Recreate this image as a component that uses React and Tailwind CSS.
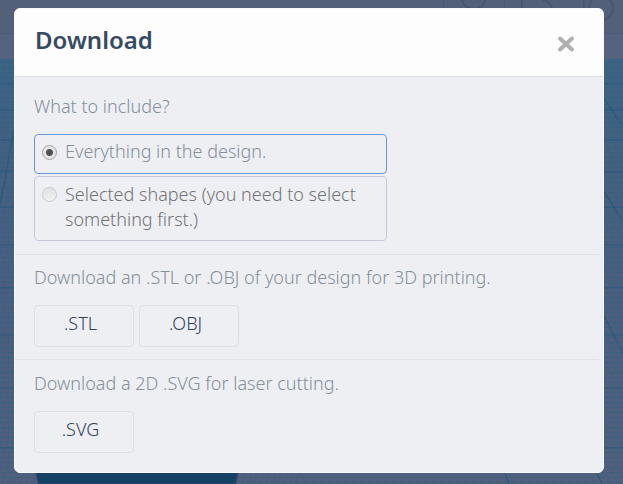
import React from "react";

function Workplane() {
  return (
    <svg
      className="absolute inset-0 h-full w-full"
      viewBox="0 0 623 484"
      preserveAspectRatio="none"
      aria-hidden="true"
    >
      <defs>
        <linearGradient id="plane" x1="0" y1="0" x2="0" y2="1">
          <stop offset="0" stopColor="#3d6384" />
          <stop offset="0.4" stopColor="#485f7e" />
          <stop offset="1" stopColor="#50607d" />
        </linearGradient>
        <pattern id="rows" width="20" height="5" patternUnits="userSpaceOnUse">
          <path d="M0 2.5H20" stroke="#2c5a80" strokeOpacity="0.35" />
        </pattern>
        <pattern id="leftCols" width="6" height="20" patternUnits="userSpaceOnUse" patternTransform="skewX(-14)">
          <path d="M3 0V20" stroke="#2c5a80" strokeOpacity="0.3" />
        </pattern>
        <pattern id="rightCols" width="8" height="20" patternUnits="userSpaceOnUse" patternTransform="skewX(27)">
          <path d="M4 0V20" stroke="#2c5a80" strokeOpacity="0.3" />
        </pattern>
      </defs>
      <rect width="623" height="59" fill="#526079" />
      <rect y="33" width="623" height="26" fill="#56637e" />
      <path d="M0 33.5H623" stroke="#4a5a78" />
      <path d="M443.500 0V9M504.500 0V9" stroke="#4a5a78" />
      <g fill="none" stroke="#46566f" strokeWidth="2">
        <path d="M462 0C463 5 468 9 474 9S484 5 485 0" />
        <path d="M522 9V0M542 0Q551 1 552 9" />
        <path d="M584 9V0" />
        <circle cx="601" cy="8" r="12" />
      </g>
      <rect y="59" width="623" height="425" fill="url(#plane)" />
      <rect y="59" width="623" height="425" fill="url(#rows)" />
      <rect y="59" width="300" height="425" fill="url(#leftCols)" />
      <rect x="300" y="59" width="323" height="425" fill="url(#rightCols)" />
      <g stroke="#235680" strokeWidth="1.2" strokeOpacity="0.7" fill="none">
        <path d="M0 84H14M0 110H14M0 140H14M0 171H14M0 207H14M0 245H14M0 288H14M0 335H14M0 388H14M0 448H14" />
        <path d="M604 84H623M604 110H623M604 140H623M604 172H623M604 207H623M604 245H623M604 288H623M604 335H623M604 388H623M604 448H623" />
        <path d="M14 130L0 205M604 99L623 126M604 192L623 221M604 316L623 354M505 473L509 484M597 473L602 484" />
      </g>
      <path d="M36 470H238L235 484H39Z" fill="#154164" stroke="#254469" strokeWidth="2" />
    </svg>
  );
}

function Option({ label, className, ...input }) {
  return (
    <label className={"flex items-start gap-2 rounded-[4px] border pl-[7px] pr-4 " + className}>
      <input
        type="radio"
        name="include"
        className="mt-[10px] size-[15px] shrink-0 appearance-none rounded-full border border-[#b4b4b4] bg-linear-to-b from-[#e0e1e2] to-[#f2f2f3] checked:border-[#a4a4a4] checked:bg-[radial-gradient(circle,#505050_0_3px,#e4e4e4_4px)] disabled:border-[#c8cacd]"
        {...input}
      />
      <span>{label}</span>
    </label>
  );
}

function FormatButton({ children }) {
  return (
    <button
      type="button"
      className="h-[42px] w-[100px] rounded-[4px] border border-[#dfe1e5] pr-[7px] pb-[5px] text-[#2e4259]"
    >
      {children}
    </button>
  );
}

export default function App() {
  return (
    <div className="relative min-h-screen overflow-hidden bg-[#50607d] font-['Noto_Sans','Open_Sans',sans-serif] text-[18px] leading-[25px] font-light">
      <Workplane />
      <div
        role="dialog"
        aria-labelledby="dialog-title"
        className="relative mt-2 mr-[19px] mb-[11px] ml-[14px] overflow-hidden rounded-[6px] border border-[#f8f9fb] bg-[#eeeff3] text-[#84909a]"
      >
        <header className="flex items-center justify-between border-b border-[#dadee6] bg-[#fdfdfd] pt-3 pr-7 pb-[18px] pl-5">
          <h2 id="dialog-title" className="text-[24px] leading-[37px] font-semibold text-[#364b63]">
            Download
          </h2>
          <button type="button" aria-label="Close" className="mt-2">
            <svg width="18" height="18" viewBox="0 0 18 18" aria-hidden="true">
              <path d="M3 3.500L15 14.500M15 3.500L3 14.500" stroke="#b0b0b0" strokeWidth="4" strokeLinecap="round" />
            </svg>
          </button>
        </header>

        <div className="pr-1">
          <fieldset className="border-b border-[#dfe1e6] px-[19px] pt-[17px] pb-[13px]">
            <legend className="float-left mb-[15px] w-full">What to include?</legend>
            <div className="clear-both flex max-w-[353px] flex-col gap-[2px]">
              <Option
                label="Everything in the design."
                className="border-[#6b96dc] pt-1 pb-[9px] [&>input]:mt-[6px]"
                defaultChecked
              />
              <Option
                label="Selected shapes (you need to select something first.)"
                className="border-[#c5cadb] pt-[5px] pb-2 text-[#747474] [&>input]:mt-[5px]"
                disabled
              />
            </div>
          </fieldset>

          <section className="border-b border-[#dfe1e6] px-[19px] pt-[10px] pb-3">
            <p className="mb-[15px]">Download an .STL or .OBJ of your design for 3D printing.</p>
            <div className="flex gap-[5px]">
              <FormatButton>.STL</FormatButton>
              <FormatButton>.OBJ</FormatButton>
            </div>
          </section>

          <section className="px-[19px] pt-[11px] pb-[19px]">
            <p className="mb-[15px]">Download a 2D .SVG for laser cutting.</p>
            <FormatButton>.SVG</FormatButton>
          </section>
        </div>
      </div>
    </div>
  );
}
